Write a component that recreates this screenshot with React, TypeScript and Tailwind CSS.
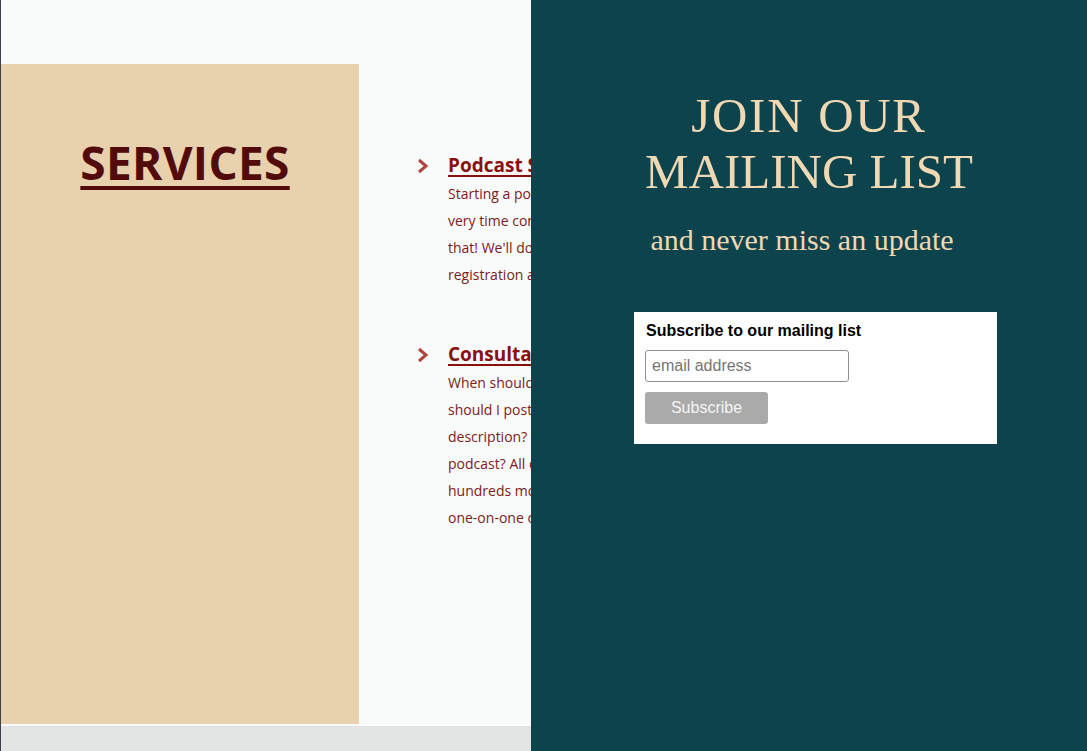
import React from 'react'

const serviceItems = [
  {
    title: 'Podcast Setup',
    lines: [
      'Starting a podcast can be overwhelming and',
      'very time consuming. Let us take care of',
      "that! We'll do everything from hosting",
      'registration and distribution.',
    ],
  },
  {
    title: 'Consultation',
    lines: [
      'When should I release episodes? How often',
      'should I post? What should go into my',
      "description? What's the best way to grow my",
      'podcast? All of these questions, and',
      'hundreds more, can be answered in a',
      'one-on-one consultation.',
    ],
  },
]

function Chevron() {
  return (
    <svg width="12" height="16" viewBox="0 0 12 16" className="mt-[7px] shrink-0">
      <polyline
        points="2,2 9,8 2,14"
        fill="none"
        stroke="#b0453b"
        strokeWidth="3"
      />
    </svg>
  )
}

export default function App() {
  return (
    <div className="relative h-[751px] w-[1087px] overflow-hidden border-l border-[#3b404c] bg-[#f9fbfa] font-['Open_Sans',sans-serif]">
      <div className="flex flex-col">
        <div className="h-[64px]" />
        <div className="flex h-[660px]">
          <div className="flex w-[358px] shrink-0 justify-center bg-[#e8d1ad] pt-[68px]">
            <h2 className="ml-[10px] text-[46px] font-bold leading-[60px] tracking-[0.3px] text-[#520a0a] underline decoration-[4px] underline-offset-[6px]">
              SERVICES
            </h2>
          </div>
          {/* content continues under the mailing list panel, clipped at its edge */}
          <div className="flex w-[172px] flex-col gap-[52px] overflow-hidden pl-[58px] pt-[87px]">
            {serviceItems.map((item) => (
              <div key={item.title} className="flex gap-[19px]">
                <Chevron />
                <div>
                  <h3 className="whitespace-nowrap text-[19px] font-bold leading-[28px] text-[#8a0f0f] underline decoration-[2px] underline-offset-[3px]">
                    {item.title}
                  </h3>
                  <p className="mt-[1px] whitespace-nowrap text-[14px] leading-[27px] text-[#7c2020]">
                    {item.lines.map((l, i) => (
                      <React.Fragment key={i}>
                        {l}
                        <br />
                      </React.Fragment>
                    ))}
                  </p>
                </div>
              </div>
            ))}
          </div>
        </div>
        <div className="h-[2px]" />
        <div className="h-[25px] bg-[#e3e5e4]" />
      </div>

      {/* slide-in mailing list panel */}
      <div className="absolute right-0 top-0 flex h-full w-[556px] flex-col bg-[#0d434c] pt-[88px] font-['Liberation_Serif',serif] text-[#f0d8b3]">
        <h2 className="text-center text-[49px] leading-[56px]">
          <span className="tracking-[1.7px]">JOIN OUR</span>
          <br />
          MAILING LIST
        </h2>
        <p className="mt-[20px] pr-[14px] text-center text-[30px] leading-[40px]">
          and never miss an update
        </p>
        <form
          onSubmit={(e) => e.preventDefault()}
          className="ml-[103px] mt-[52px] flex w-[363px] flex-col bg-white px-[11px] pb-[20px] pt-[9px] font-['Liberation_Sans',sans-serif]"
        >
          <label className="pl-[1px] text-[16px] font-bold leading-[20px] text-black">
            Subscribe to our mailing list
          </label>
          <input
            type="email"
            placeholder="email address"
            className="mt-[9px] h-[32px] w-[204px] rounded-[3px] border border-[#8f8f8f] px-[6px] text-[16px] text-black placeholder:text-[#757575] outline-none"
          />
          <button
            type="submit"
            className="mt-[10px] h-[32px] w-[123px] rounded-[3px] bg-[#aaaaaa] text-[16px] text-[#f5f5f5]"
          >
            Subscribe
          </button>
        </form>
      </div>
    </div>
  )
}
